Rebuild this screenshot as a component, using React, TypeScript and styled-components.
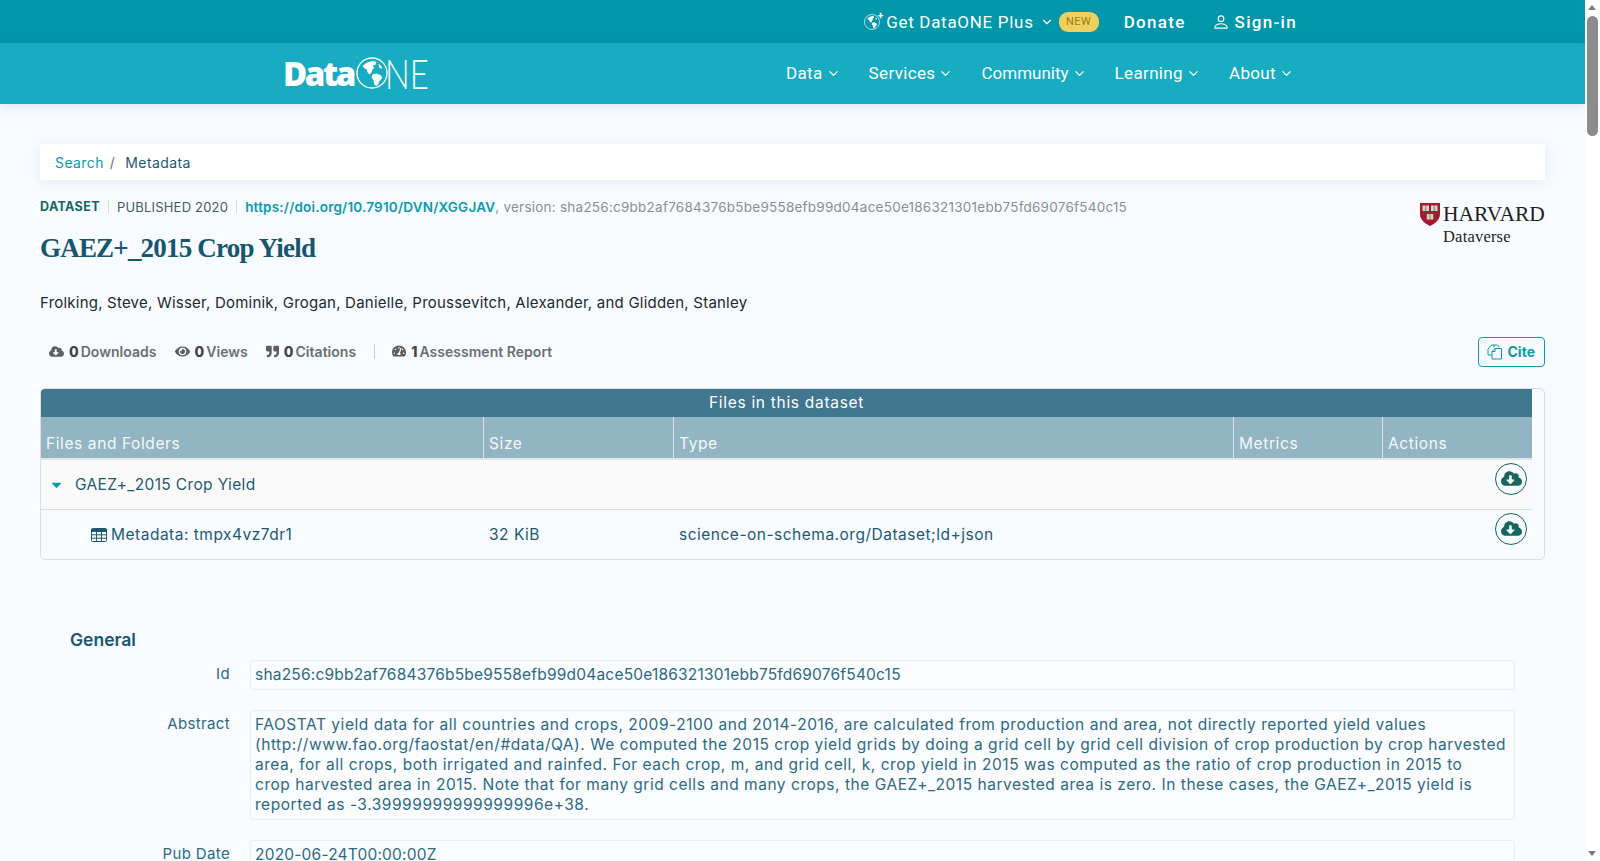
import styled, { createGlobalStyle } from "styled-components";
import { FaCloudDownloadAlt, FaEye, FaQuoteRight, FaTachometerAlt, FaCaretDown } from "react-icons/fa";
import { FiChevronDown } from "react-icons/fi";
import { BsPerson } from "react-icons/bs";

const GlobalStyles = createGlobalStyle`
  html, body {
    margin: 0;
    height: 100%;
    overflow: hidden;
  }

  body {
    font-family: "Inter", "Liberation Sans", sans-serif;
    background: #f8fbff;
    color: #1c5a73;
  }
`;

const columns = "442px 190px 560px 149px 150px";

function GlobeMark({ size }: { size: number }) {
  return (
    <svg width={size} height={size} viewBox="0 0 33 33">
      <circle cx="16.5" cy="16.5" r="15.500" fill="none" stroke="#fff" strokeWidth="1.4" />
      <path d="M7 9l4-3 6-2 4 1-1 3-3 1 2 2-2 2-1 3-2 2-2-2-1-3-3-2z" fill="#fff" />
      <path d="M17 18l4-1 5 2 1 3-3 3-1 3-2 2-2-1-1-5-2-3z" fill="#fff" />
      <path d="M23 7l3 2 1 3-3-1z" fill="#fff" />
    </svg>
  );
}

function DataOneLogo() {
  return (
    <Logo>
      <LogoData>Data</LogoData>
      <GlobeMark size={32} />
      <LogoOne>NE</LogoOne>
    </Logo>
  );
}

function HarvardLogo() {
  return (
    <Harvard>
      <HarvardTop>
        <svg width="20" height="23" viewBox="0 0 20 23">
          <path d="M0 0h20v11c0 6-5 9.500-10 12C5 20.500 0 17 0 11z" fill="#a51c30" />
          <rect x="2.500" y="2.500" width="6.500" height="5.500" fill="#d9d2cb" />
          <rect x="11" y="2.500" width="6.500" height="5.500" fill="#d9d2cb" />
          <rect x="6.800" y="11" width="6.500" height="5.500" fill="#d9d2cb" />
          <path d="M5.700 2.500v5.500M14.200 2.500v5.500M10 11v5.500" stroke="#6b4a4a" strokeWidth="0.7" />
        </svg>
        <HarvardName>HARVARD</HarvardName>
      </HarvardTop>
      <HarvardSub>Dataverse</HarvardSub>
    </Harvard>
  );
}

function CopyIcon() {
  return (
    <svg width="16" height="16" viewBox="0 0 16 16" fill="none" stroke="currentColor" strokeWidth="1">
      <path d="M7 3.500V1h3.500L12 2.500v1" />
      <path d="M7 1L4.500 1 1 5v6h4" />
      <path d="M5 7.500L8 4.500h6.500V15H5z" />
      <path d="M8 4.500V7.500H5" />
    </svg>
  );
}

function TableIcon() {
  return (
    <svg width="16" height="14" viewBox="0 0 16 14" fill="none" stroke="currentColor">
      <rect x="0.500" y="0.500" width="15" height="13" rx="1" />
      <path d="M0 1.500h16v2H0z" fill="currentColor" />
      <path d="M5.500 3v11M10.500 3v11M0 6.800h16M0 10.200h16" />
    </svg>
  );
}

function App(): JSX.Element {
  return (
    <Frame>
      <GlobalStyles />
      <Page>
        <TopBar>
          <PlusLink>
            <GlobeIcon>
              <GlobeMark size={16} />
              <PlusMark>+</PlusMark>
            </GlobeIcon>
            Get DataONE Plus
            <FiChevronDown size={14} />
          </PlusLink>
          <NewBadge>NEW</NewBadge>
          <TopLink>Donate</TopLink>
          <TopLink>
            <BsPerson size={18} />
            Sign-in
          </TopLink>
        </TopBar>

        <NavBar>
          <DataOneLogo />
          <NavLinks>
            {["Data", "Services", "Community", "Learning", "About"].map((item) => (
              <NavLink key={item}>
                {item}
                <FiChevronDown size={15} />
              </NavLink>
            ))}
          </NavLinks>
        </NavBar>

        <Content>
          <Breadcrumb>
            <BreadLink>Search</BreadLink>
            <BreadSlash>/</BreadSlash>
            <span>Metadata</span>
          </Breadcrumb>

          <HeadRow>
            <div>
              <MetaLine>
                <strong>DATASET</strong>
                <MetaSep />
                <Published>PUBLISHED 2020</Published>
                <MetaSep />
                <DoiLink>https://doi.org/10.7910/DVN/XGGJAV</DoiLink>
                <span>, version: sha256:c9bb2af7684376b5be9558efb99d04ace50e186321301ebb75fd69076f540c15</span>
              </MetaLine>
              <Title>GAEZ+_2015 Crop Yield</Title>
            </div>
            <HarvardLogo />
          </HeadRow>

          <Authors>Frolking, Steve, Wisser, Dominik, Grogan, Danielle, Proussevitch, Alexander, and Glidden, Stanley</Authors>

          <MetricsRow>
            <Metric>
              <FaCloudDownloadAlt size={15} />
              <b>0</b> Downloads
            </Metric>
            <Metric>
              <FaEye size={15} />
              <b>0</b> Views
            </Metric>
            <Metric>
              <FaQuoteRight size={13} />
              <b>0</b> Citations
            </Metric>
            <MetricSep />
            <Metric>
              <FaTachometerAlt size={14} />
              <b>1</b> Assessment Report
            </Metric>
            <CiteButton>
              <CopyIcon />
              Cite
            </CiteButton>
          </MetricsRow>

          <FilesCard>
            <FilesInner>
              <FilesTitle>Files in this dataset</FilesTitle>
              <HeaderRow>
                <HeaderCell>Files and Folders</HeaderCell>
                <HeaderCell>Size</HeaderCell>
                <HeaderCell>Type</HeaderCell>
                <HeaderCell>Metrics</HeaderCell>
                <HeaderCell>Actions</HeaderCell>
              </HeaderRow>
              <FileRow $folder>
                <FolderName>
                  <Caret />
                  GAEZ+_2015 Crop Yield
                </FolderName>
                <span />
                <span />
                <span />
                <DownloadCell>
                  <DownloadButton>
                    <FaCloudDownloadAlt size={21} />
                  </DownloadButton>
                </DownloadCell>
              </FileRow>
              <FileRow>
                <FileName>
                  <TableIcon />
                  Metadata: tmpx4vz7dr1
                </FileName>
                <FileText>32 KiB</FileText>
                <FileText>science-on-schema.org/Dataset;ld+json</FileText>
                <span />
                <DownloadCell>
                  <DownloadButton>
                    <FaCloudDownloadAlt size={21} />
                  </DownloadButton>
                </DownloadCell>
              </FileRow>
            </FilesInner>
          </FilesCard>

          <Section>
            <SectionTitle>General</SectionTitle>
            <Field>
              <FieldLabel>Id</FieldLabel>
              <FieldValue>sha256:c9bb2af7684376b5be9558efb99d04ace50e186321301ebb75fd69076f540c15</FieldValue>
            </Field>
            <Field>
              <FieldLabel>Abstract</FieldLabel>
              <AbstractValue>
                FAOSTAT yield data for all countries and crops, 2009-2100 and 2014-2016, are calculated from production and area, not directly reported yield values
                <br />
                (http://www.fao.org/faostat/en/#data/QA). We computed the 2015 crop yield grids by doing a grid cell by grid cell division of crop production by crop harvested
                <br />
                area, for all crops, both irrigated and rainfed. For each crop, m, and grid cell, k, crop yield in 2015 was computed as the ratio of crop production in 2015 to
                <br />
                crop harvested area in 2015. Note that for many grid cells and many crops, the GAEZ+_2015 harvested area is zero. In these cases, the GAEZ+_2015 yield is
                <br />
                reported as -3.39999999999999996e+38.
              </AbstractValue>
            </Field>
            <Field>
              <FieldLabel>Pub Date</FieldLabel>
              <FieldValue>2020-06-24T00:00:00Z</FieldValue>
            </Field>
          </Section>
        </Content>
      </Page>

      <Scrollbar>
        <ScrollArrow $up />
        <ScrollThumb />
        <ScrollTrack />
        <ScrollArrow />
      </Scrollbar>
    </Frame>
  );
}

export default App;

const Frame = styled.div`
  display: flex;
  height: 100vh;
  overflow: hidden;
`;

const Page = styled.div`
  flex: 1;
  min-width: 0;
  overflow: hidden;
`;

const TopBar = styled.div`
  height: 43px;
  display: flex;
  align-items: center;
  justify-content: flex-end;
  padding-right: 288px;
  background: #0097ab;
  color: #fff;
  font-family: "Roboto", sans-serif;
`;

const PlusLink = styled.a`
  display: flex;
  align-items: center;
  gap: 6px;
  font-size: 17px;
  letter-spacing: 0.7px;
`;

const GlobeIcon = styled.span`
  position: relative;
  display: flex;
`;

const PlusMark = styled.span`
  position: absolute;
  top: -5px;
  right: -4px;
  font-size: 11px;
  font-weight: 700;
`;

const NewBadge = styled.span`
  margin-left: 5px;
  margin-right: 25px;
  width: 40px;
  height: 20px;
  border-radius: 9px;
  background: #efcf5e;
  color: #9a7d10;
  font-size: 11px;
  line-height: 20px;
  text-align: center;
  letter-spacing: 0.5px;
`;

const TopLink = styled.a`
  display: flex;
  align-items: center;
  gap: 5px;
  margin-right: 26px;
  font-size: 17px;
  font-weight: 500;
  letter-spacing: 1.3px;

  &:last-child {
    margin-right: 0;
  }
`;

const NavBar = styled.nav`
  height: 60px;
  display: flex;
  align-items: center;
  padding: 0 291px 1px 283px;
  background: #17acc1;
  color: #fff;
  font-family: "Roboto", sans-serif;
  box-shadow: 0 2px 10px rgba(0, 60, 80, 0.12);
`;

const Logo = styled.div`
  display: flex;
  align-items: center;
`;

const LogoData = styled.span`
  font-family: "Open Sans", sans-serif;
  font-size: 33px;
  font-weight: 800;
  letter-spacing: -2.4px;
  margin-right: 2px;
`;

const LogoOne = styled.span`
  font-family: "Lato", sans-serif;
  font-size: 42px;
  line-height: 42px;
  font-weight: 300;
  transform: scaleX(0.78);
  transform-origin: left;
  margin-left: -3px;
`;

const NavLinks = styled.div`
  display: flex;
  gap: 28px;
  margin-left: auto;
`;

const NavLink = styled.a`
  display: flex;
  align-items: center;
  gap: 3px;
  font-size: 17px;
  letter-spacing: 0.35px;

  &:nth-child(3) {
    letter-spacing: 0;
  }
`;

const Content = styled.main`
  padding: 40px 40px 0;
`;

const Breadcrumb = styled.div`
  height: 36px;
  display: flex;
  align-items: center;
  padding-left: 15px;
  background: #fff;
  box-shadow: 0 2px 12px rgba(120, 150, 170, 0.14);
  font-size: 14px;
  letter-spacing: 0.4px;
`;

const BreadLink = styled.a`
  color: #0a9aae;
`;

const BreadSlash = styled.span`
  margin: 0 10px 0 6px;
  color: #5f6f78;
`;

const HeadRow = styled.div`
  display: flex;
  justify-content: space-between;
  align-items: flex-start;
  margin-top: 18px;
`;

const MetaLine = styled.div`
  display: flex;
  align-items: center;
  height: 17px;
  font-size: 13.500px;
  color: #8a8f93;
  letter-spacing: 0.24px;

  strong {
    color: #14665f;
    font-size: 12.500px;
    font-weight: 700;
    letter-spacing: 0.38px;
  }
`;

const MetaSep = styled.span`
  width: 1px;
  height: 13px;
  margin: 0 8px;
  background: #d8dde0;
`;

const Published = styled.span`
  color: #455a64;
  font-size: 13px;
  letter-spacing: 0.2px;
`;

const DoiLink = styled.a`
  color: #0a9aae;
  font-weight: 600;
  letter-spacing: 0.2px;
`;

const Title = styled.h1`
  margin: 16px 0 0;
  font-family: "Liberation Serif", serif;
  font-size: 27px;
  line-height: 34px;
  font-weight: 700;
  letter-spacing: -0.8px;
  color: #17566f;
`;

const Harvard = styled.div`
  width: 125px;
  margin-top: 4px;
  color: #1e1e1e;
  font-family: "Liberation Serif", serif;
`;

const HarvardTop = styled.div`
  display: flex;
  align-items: center;
  gap: 3px;
`;

const HarvardName = styled.span`
  font-size: 21.500px;
  line-height: 24px;
`;

const HarvardSub = styled.div`
  margin: 1px 0 0 23px;
  font-size: 16.500px;
  line-height: 20px;
  letter-spacing: 0.2px;
`;

const Authors = styled.p`
  margin: 28px 0 0;
  font-size: 15px;
  line-height: 20px;
  color: #22292e;
  letter-spacing: 0.22px;
`;

const MetricsRow = styled.div`
  display: flex;
  align-items: center;
  height: 32px;
  margin-top: 22px;
  padding-left: 9px;
`;

const Metric = styled.span`
  display: flex;
  align-items: center;
  gap: 5px;
  margin-right: 18px;
  font-size: 14px;
  font-weight: 600;
  letter-spacing: 0.03px;
  color: #6b6f72;

  svg {
    color: #5d5f61;
  }

  b {
    color: #444;
    font-weight: 800;
    margin-right: -3px;
  }
`;

const MetricSep = styled.span`
  width: 1px;
  height: 15px;
  margin: 0 17px 0 0;
  background: #c9cdd0;
`;

const CiteButton = styled.button`
  display: flex;
  align-items: center;
  gap: 5px;
  height: 30px;
  margin: 1px 0 0 auto;
  padding: 0 9px 0 8px;
  border: 1px solid #0a9aae;
  border-radius: 4px;
  background: transparent;
  color: #0a9aae;
  font-family: inherit;
  font-size: 14px;
  font-weight: 700;
`;

const FilesCard = styled.div`
  margin-top: 21px;
  padding-right: 12px;
  border: 1px solid #dcdfe1;
  border-radius: 5px;
  overflow: hidden;
`;

const FilesInner = styled.div`
  font-size: 15.500px;
  letter-spacing: 0.5px;
`;

const FilesTitle = styled.div`
  height: 28px;
  line-height: 28px;
  text-align: center;
  background: #41768f;
  color: #fff;
  letter-spacing: 0.7px;
`;

const HeaderRow = styled.div`
  display: grid;
  grid-template-columns: ${columns};
  height: 41px;
  border-bottom: 2px solid #e2e4e5;
  background: #92b5c4;
  color: #f5f9fa;
  letter-spacing: 0.6px;
`;

const HeaderCell = styled.div`
  padding: 17px 5px 0;
  border-left: 1px solid #dbe6eb;

  &:first-child {
    border-left: 0;
  }
`;

const FileRow = styled.div<{ $folder?: boolean }>`
  display: grid;
  grid-template-columns: ${columns};
  height: 49px;
  align-items: center;
  background: ${(p) => (p.$folder ? "#fafafa" : "transparent")};
  border-bottom: ${(p) => (p.$folder ? "1px solid #dcdfe1" : "0")};
`;

const FolderName = styled.div`
  display: flex;
  align-items: center;
  gap: 13px;
  padding-left: 10px;
  letter-spacing: 0.35px;
`;

const Caret = styled(FaCaretDown)`
  width: 11px;
  color: #0a9aae;
`;

const FileName = styled.div`
  display: flex;
  align-items: center;
  gap: 4px;
  padding-left: 50px;
`;

const FileText = styled.div`
  padding-left: 6px;
`;

const DownloadCell = styled.div`
  display: flex;
  justify-content: flex-end;
  padding: 0 5px 12px 0;
`;

const DownloadButton = styled.span`
  display: flex;
  align-items: center;
  justify-content: center;
  width: 30px;
  height: 30px;
  border: 1px solid #14665f;
  border-radius: 50%;
  color: #14665f;
`;

const Section = styled.section`
  margin-top: 69px;
  padding: 0 30px;
`;

const SectionTitle = styled.h2`
  margin: 0;
  font-size: 17.500px;
  line-height: 22px;
  font-weight: 600;
  color: #17566f;
`;

const Field = styled.div`
  display: grid;
  grid-template-columns: 160px 1fr;
  column-gap: 20px;
  margin-top: 20px;

  h2 + & {
    margin-top: 9px;
  }
`;

const FieldLabel = styled.div`
  padding-top: 4px;
  text-align: right;
  font-size: 15px;
  line-height: 20px;
  letter-spacing: 0.35px;
  color: #2d6a82;
`;

const FieldValue = styled.div`
  padding: 4px 4px;
  border: 1px solid #ebedef;
  border-radius: 3px;
  background: #fafcfe;
  font-size: 15.500px;
  line-height: 20px;
  letter-spacing: 0.2px;
  white-space: nowrap;
  color: #2d6a82;
`;

const AbstractValue = styled(FieldValue)`
  letter-spacing: 0.53px;
`;

const Scrollbar = styled.aside`
  width: 15px;
  display: flex;
  flex-direction: column;
  background: #fff;
`;

const ScrollArrow = styled.span<{ $up?: boolean }>`
  height: 15px;
  flex: none;
  position: relative;

  &::after {
    content: "";
    position: absolute;
    left: 3px;
    top: 5px;
    border-left: 4.500px solid transparent;
    border-right: 4.500px solid transparent;
    ${(p) => (p.$up ? "border-bottom: 5px solid #7b7b7b;" : "border-top: 5px solid #7b7b7b;")}
  }
`;

const ScrollThumb = styled.span`
  height: 120px;
  flex: none;
  margin: 1px 2px;
  border-radius: 6px;
  background: #8c8c8c;
`;

const ScrollTrack = styled.span`
  flex: 1;
`;
